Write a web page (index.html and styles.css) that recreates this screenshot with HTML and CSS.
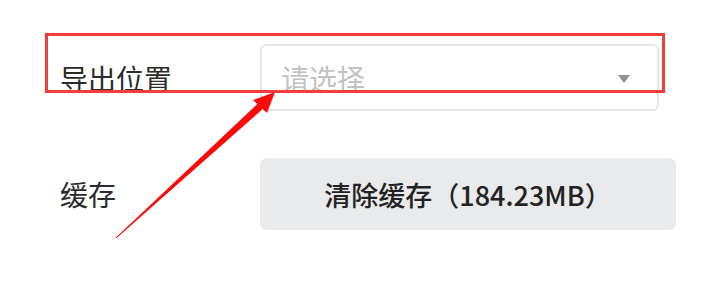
FILE: index.html
```html
<!DOCTYPE html>
<html lang="zh-CN">
<head>
<meta charset="utf-8">
<link rel="stylesheet" href="styles.css">
</head>
<body>
<div class="page">
  <div class="form">
    <div class="label">导出位置</div>
    <div class="select">
      <span class="placeholder">请选择</span>
      <span class="caret"></span>
    </div>
    <div class="label">缓存</div>
    <button class="clear-btn">清除缓存（184.23MB）</button>
  </div>
  <div class="highlight"></div>
  <svg class="pointer" width="708" height="285" viewBox="0 0 708 285">
    <polygon points="115.6,237.7 257.4,103.9 253,100 275,92 267,113 262.6,109.1 116.4,238.3" fill="#fb0a0a"/>
  </svg>
</div>
</body>
</html>
```
FILE: styles.css
```css
html, body {
  margin: 0;
  padding: 0;
  background: #ffffff;
}
.page {
  position: relative;
  width: 708px;
  height: 285px;
  overflow: hidden;
  font-family: "Noto Sans CJK SC", "Noto Sans", sans-serif;
}
.form {
  display: grid;
  grid-template-columns: 200px 1fr;
  row-gap: 47px;
  align-items: center;
  padding: 44px 0 0 60px;
}
.label {
  font-size: 28px;
  color: #2b2b2b;
  line-height: 1;
}
.select {
  box-sizing: border-box;
  width: 399px;
  height: 67px;
  border: 2px solid #e6e6e6;
  border-radius: 6px;
  display: flex;
  align-items: center;
  justify-content: space-between;
  padding: 0 27px 0 19px;
}
.placeholder {
  font-size: 28px;
  color: #c2c2c2;
  line-height: 1;
}
.caret {
  width: 0;
  height: 0;
  border-left: 6px solid transparent;
  border-right: 6px solid transparent;
  border-top: 8px solid #8f8f8f;
  margin-top: 2px;
}
.clear-btn {
  box-sizing: border-box;
  width: 416px;
  height: 72px;
  border: none;
  border-radius: 7px;
  background: #e9eaec;
  font-family: "Noto Sans CJK SC", "Noto Sans", sans-serif;
  font-size: 27px;
  font-weight: 500;
  color: #222;
  padding: 0;
  line-height: 1;
}
.highlight {
  position: absolute;
  left: 45px;
  top: 33px;
  width: 620px;
  height: 60px;
  box-sizing: border-box;
  border: 3px solid #f43c3c;
}
.pointer {
  position: absolute;
  left: 0;
  top: 0;
}
```
